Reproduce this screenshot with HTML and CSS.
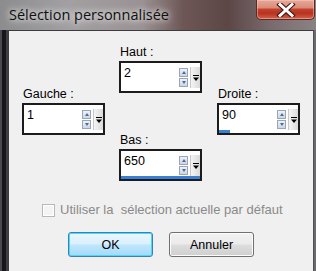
FILE: index.html
```html
<!DOCTYPE html>
<html lang="fr">
<head>
<meta charset="utf-8">
<link rel="stylesheet" href="styles.css">
</head>
<body>
<div class="window">
  <div class="titlebar">
    <span class="title">Sélection personnalisée</span>
    <button class="close" aria-label="Fermer">
      <svg width="20" height="14" viewBox="0 0 20 14">
        <path d="M4 1.5 L16 12.5 M16 1.5 L4 12.5" stroke="#3a1410" stroke-width="5" stroke-linecap="square"/>
        <path d="M4 1.5 L16 12.5 M16 1.5 L4 12.5" stroke="#ffffff" stroke-width="3" stroke-linecap="square"/>
      </svg>
    </button>
  </div>
  <div class="frame">
    <div class="edge-left"></div>
    <div class="client">
      <div class="fields">
        <div class="col side">
          <div class="field">
            <label class="lbl">Gauche :</label>
            <div class="num">
              <div class="num-row">
                <span class="val">1</span>
                <span class="spin"><span class="arrow up"></span><span class="arrow down"></span></span>
                <span class="drop"><svg width="6" height="7" viewBox="0 0 6 7"><path d="M0 0.5H6" stroke="#000" stroke-width="1"/><path d="M0 2.5H6L3 6Z" fill="#000"/></svg></span>
              </div>
              <div class="track"><div class="fill" style="width:0%"></div></div>
            </div>
          </div>
        </div>
        <div class="col mid">
          <div class="field">
            <label class="lbl">Haut :</label>
            <div class="num">
              <div class="num-row">
                <span class="val">2</span>
                <span class="spin"><span class="arrow up"></span><span class="arrow down"></span></span>
                <span class="drop"><svg width="6" height="7" viewBox="0 0 6 7"><path d="M0 0.5H6" stroke="#000" stroke-width="1"/><path d="M0 2.5H6L3 6Z" fill="#000"/></svg></span>
              </div>
              <div class="track"><div class="fill" style="width:0%"></div></div>
            </div>
          </div>
          <div class="field bas">
            <label class="lbl">Bas :</label>
            <div class="num">
              <div class="num-row">
                <span class="val">650</span>
                <span class="spin"><span class="arrow up"></span><span class="arrow down"></span></span>
                <span class="drop"><svg width="6" height="7" viewBox="0 0 6 7"><path d="M0 0.5H6" stroke="#000" stroke-width="1"/><path d="M0 2.5H6L3 6Z" fill="#000"/></svg></span>
              </div>
              <div class="track"><div class="fill" style="width:100%"></div></div>
            </div>
          </div>
        </div>
        <div class="col side">
          <div class="field">
            <label class="lbl">Droite :</label>
            <div class="num">
              <div class="num-row">
                <span class="val">90</span>
                <span class="spin"><span class="arrow up"></span><span class="arrow down"></span></span>
                <span class="drop"><svg width="6" height="7" viewBox="0 0 6 7"><path d="M0 0.5H6" stroke="#000" stroke-width="1"/><path d="M0 2.5H6L3 6Z" fill="#000"/></svg></span>
              </div>
              <div class="track"><div class="fill" style="width:14%"></div></div>
            </div>
          </div>
        </div>
      </div>
      <div class="check-row">
        <span class="checkbox"></span>
        <span class="check-text">Utiliser la&nbsp; sélection actuelle par défaut</span>
      </div>
      <div class="buttons">
        <button class="btn default">OK</button>
        <button class="btn">Annuler</button>
      </div>
    </div>
    <div class="edge-right"></div>
  </div>
</div>
</body>
</html>
```

FILE: styles.css
```css
* { box-sizing: border-box; }
html, body { margin: 0; padding: 0; }
body { width: 316px; height: 271px; overflow: hidden; background: #222; }

.window {
  width: 316px;
  height: 271px;
  display: flex;
  flex-direction: column;
  background: linear-gradient(90deg, #8c8c8e 0%, #a2a0a2 22%, #9a9294 45%, #6e5656 58%, #5c4646 72%, #7a6c6e 86%, #8a8284 100%);
}

.titlebar {
  height: 30px;
  display: flex;
  align-items: flex-start;
  padding-left: 9px;
}
.title {
  margin-top: 5px;
  font-family: "Open Sans", "Noto Sans", sans-serif;
  font-size: 14.5px;
  line-height: 19px;
  color: #101010;
  text-shadow: 0 0 6px rgba(255,255,255,0.9), 0 0 10px rgba(255,255,255,0.7);
}
.close {
  margin-left: auto;
  margin-right: 1px;
  width: 59px;
  height: 20px;
  padding: 0;
  border: 1px solid #5a2a26;
  border-top: none;
  border-radius: 0 0 5px 5px;
  background: linear-gradient(180deg, #e7a999 0%, #d98c78 40%, #c2402c 50%, #b8321f 70%, #d2624a 100%);
  box-shadow: inset 0 0 0 1px rgba(255,210,200,0.45);
  display: flex;
  align-items: center;
  justify-content: center;
}
.close svg { display: block; }

.frame {
  flex: 1;
  display: flex;
}
.edge-left {
  width: 8px;
  background: linear-gradient(90deg, #4a4a4e 0px, #4a4a4e 2px, #16161c 2px, #16161c 6px, #3e3e44 6px);
}
.edge-right {
  width: 2px;
  background: #6a6a6e;
}
.client {
  width: 306px;
  background: #f0f0f0;
  border-top: 1px solid #3c3c3c;
  border-left: 1px solid #3c3c3c;
  border-right: 1px solid #505050;
  display: flex;
  flex-direction: column;
  font-family: "Liberation Sans", Arial, sans-serif;
  font-size: 12.5px;
  color: #000;
}

.fields {
  display: flex;
  padding: 14px 0 0 13px;
  gap: 14px;
}
.col { display: flex; flex-direction: column; width: 83px; }
.col.side { margin-top: 42px; }
.col.mid + .col { margin-left: 1px; }
.field { display: flex; flex-direction: column; }
.field.bas { margin-top: 40px; }
.lbl {
  display: block;
  line-height: 14px;
  height: 14px;
  margin-bottom: 2px;
  padding-left: 1px;
}

.num {
  width: 83px;
  height: 32px;
  border: 2px solid #1c1c1c;
  background: #fff;
  display: flex;
  flex-direction: column;
  padding-top: 3px;
}
.num-row {
  display: flex;
  align-items: flex-start;
  height: 22px;
}
.val {
  flex: 1;
  padding-left: 3px;
  font-size: 12.5px;
  line-height: 15px;
}
.spin {
  width: 9px;
  display: flex;
  flex-direction: column;
  gap: 1px;
  margin-top: 2px;
  margin-right: 2px;
}
.arrow {
  display: block;
  width: 9px;
  height: 9px;
  border: 1px solid #9aa6b8;
  background: linear-gradient(180deg, #eef2f8, #cdd6e4);
  position: relative;
}
.arrow::after {
  content: "";
  position: absolute;
  left: 1.5px;
  border-left: 2.5px solid transparent;
  border-right: 2.5px solid transparent;
}
.arrow.up::after { top: 2px; border-bottom: 3px solid #4c6a9e; }
.arrow.down::after { top: 2px; border-top: 3px solid #4c6a9e; }
.drop {
  width: 10px;
  height: 22px;
  margin-top: 1px;
  background: linear-gradient(90deg, #f4f4f4, #dadada);
  border-left: 1px solid #c8c8c8;
  display: flex;
  align-items: center;
  justify-content: center;
}
.drop svg { display: block; }
.track {
  margin-top: auto;
  height: 3px;
  background: #fff;
}
.fill {
  height: 3px;
  background: #3a7fd6;
}

.check-row {
  display: flex;
  align-items: center;
  margin-top: 22px;
  padding-left: 33px;
  height: 14px;
}
.checkbox {
  width: 13px;
  height: 13px;
  border: 1px solid #b8b8b8;
  background: #f4f4f4;
  box-shadow: inset 0 0 0 1px #fff;
}
.check-text {
  margin-left: 5px;
  color: #8a8a8a;
  font-size: 13px;
  line-height: 14px;
}

.buttons {
  display: flex;
  gap: 16px;
  padding-left: 59px;
  margin-top: 15px;
}
.btn {
  width: 85px;
  height: 25px;
  padding: 0;
  font-family: "Liberation Sans", Arial, sans-serif;
  font-size: 12.5px;
  color: #000;
  border: 1px solid #707070;
  border-radius: 3px;
  background: linear-gradient(180deg, #f2f2f2 0%, #ebebeb 48%, #dddddd 52%, #cfcfcf 100%);
  box-shadow: inset 0 0 0 1px #fcfcfc;
}
.btn.default {
  border-color: #3c7fb1;
  background: linear-gradient(180deg, #eaf6fd 0%, #d9f0fc 48%, #bee6fd 52%, #a7d9f5 100%);
  box-shadow: inset 0 0 0 1px #48d8fb;
}
```
